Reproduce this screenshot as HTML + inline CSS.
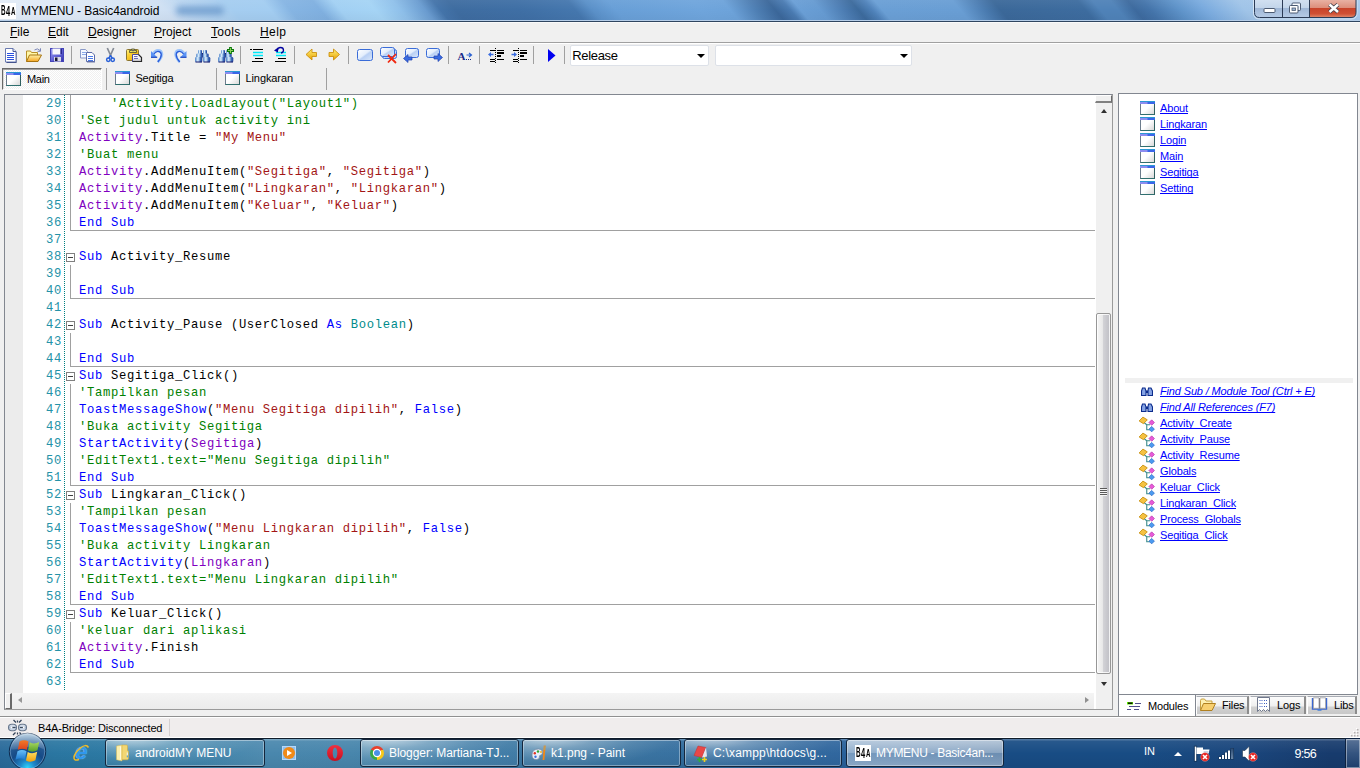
<!DOCTYPE html>
<html><head><meta charset="utf-8"><title>MYMENU - Basic4android</title>
<style>
html,body{margin:0;padding:0}
body{width:1360px;height:768px;overflow:hidden;position:relative;background:#f0f0f0;font-family:"Liberation Sans",sans-serif;font-size:12px;color:#000}
.a{position:absolute}
.t{position:absolute;white-space:pre;line-height:1}
#title{left:0;top:0;width:1360px;height:20px;overflow:hidden;background:#5a8fc6}
#title i{position:absolute;left:-30px;top:0;width:1430px;height:20px;transform-origin:0 0;transform:skewX(40deg);background:linear-gradient(to right,#e3ecf7 22px,#dbe7f5 122px,#cfe0f3 187px,#bdd7f1 207px,#afd1f0 237px,#a5cdf0 254px,#a3cdf1 292px,#86b5e3 312px,#80b0e0 342px,#a2d0f3 362px,#a5d4f5 397px,#8fc0ea 422px,#6a9cd0 447px,#4474aa 462px,#3e6ca0 477px,#3f6fa5 542px,#4577ae 597px,#5a90c8 614px,#689fd7 637px,#6fa5dc 722px,#6da3da 752px,#4f80b5 777px,#3b679a 797px,#4a7bb2 812px,#6a9fd6 822px,#669bd2 842px,#4a7ab0 867px,#3c6a9c 880px,#4f82ba 894px,#6a9fd5 904px,#699ed4 982px,#4a7bb0 1007px,#3b6899 1022px,#3d6c9f 1107px,#4f82b8 1122px,#4f82b8 1140px,#3d6a9e 1157px,#4474aa 1172px,#5f94ca 1202px,#79aade 1227px,#a0c4e8 1267px,#a8caec 1382px)}
#title s{position:absolute;left:176px;top:6px;width:48px;height:9px;background:#6d9bcd;filter:blur(3px);border-radius:4px;opacity:.85}
#title b{position:absolute;left:0;top:0;width:1360px;height:20px;background:linear-gradient(to bottom,rgba(255,255,255,.05) 0,rgba(255,255,255,0) 50%,rgba(0,0,20,.03) 100%)}
#titleline{left:0;top:20px;width:1360px;height:2px;background:linear-gradient(#b5cde8 0,#b5cde8 1px,#2f4560 1px,#2f4560 2px)}
.mi{top:26px;font-size:12px}
.mi u{text-decoration:underline;text-underline-offset:1px;text-decoration-skip-ink:none}
.b4{font-weight:bold;transform:scaleX(.5);transform-origin:0 0;color:#000}
.sepv{position:absolute;width:1px;background:#a0a0a0}
.code{font-family:"Liberation Mono",monospace;font-size:12.200px;letter-spacing:.68px;line-height:17px;white-space:pre;position:absolute;left:79px;height:17px;margin-top:1px}
.ln{font-family:"Liberation Mono",monospace;font-size:12.200px;letter-spacing:.68px;line-height:17px;position:absolute;left:29.500px;margin-top:1px;width:32.500px;text-align:right;color:#2492a8;height:17px}
.c{color:#008000}.k{color:#0000ff}.o{color:#8000c0}.s{color:#a31515}.y{color:#008b8b}.f{color:#0000ff}
.hl{position:absolute;left:70px;width:1025px;height:1px;background:#a0a0a0}
.vl{position:absolute;left:70px;width:1px;background:#a0a0a0}
.fb{position:absolute;left:66px;width:7px;height:7px;border:1px solid #808080;background:#fff}
.fb:after{content:"";position:absolute;left:1px;top:3px;width:5px;height:1px;background:#404040}
.lk{position:absolute;font-size:11px;color:#0000ff;text-decoration:underline;text-decoration-skip-ink:none;text-underline-offset:1px;white-space:pre;line-height:1;letter-spacing:-.15px;margin-top:1px}
.wi:before{content:"";position:absolute;left:-1px;top:-3px;width:15px;height:3px;background:linear-gradient(to bottom,#2c98d4 0,#2c98d4 1px,transparent 1px),linear-gradient(to right,#8c8cf0 0,#8c8cf0 45%,#3a66e8 55%)}
.wi{position:absolute;width:13px;height:10px;border:1px solid #6c7c8c;border-top:3px solid #3f6fe0;border-right-color:#2f5f5f;border-bottom-color:#2f6f6f;background:linear-gradient(135deg,#fff 45%,#d8d8d8 100%)}
.tb{position:absolute;top:744px;height:22px;border:1px solid #1c2d44;border-radius:3px;box-shadow:inset 0 0 0 1px rgba(255,255,255,.35);color:#fff;font-size:12px}
.tb span{position:absolute;left:28px;top:4px;white-space:pre;line-height:1}
</style></head><body>
<!-- title bar -->
<div class="a" id="title"><i></i><s></s><b></b></div><div class="a" id="titleline"></div>
<div class="a" style="left:0;top:3px;width:16px;height:16px;background:#fff"></div>
<div class="t b4" style="left:.8px;top:2px;font-size:15px;transform:scaleX(.42)">B</div><div class="t b4" style="left:5.800px;top:3px;font-size:15px">4</div><div class="t b4" style="left:10.800px;top:6px;font-size:11px;transform:scaleX(.56)">A</div>
<div class="t" id="ttl" style="left:21px;top:5px;font-size:12px;letter-spacing:-.08px">MYMENU - Basic4android</div>
<!-- caption buttons -->
<svg class="a" style="left:1250px;top:0" width="110" height="20" viewBox="1250 0 110 20">
<defs>
<linearGradient id="cb1" x1="0" y1="0" x2="0" y2="1"><stop offset="0" stop-color="#d3e1f1"/><stop offset=".46" stop-color="#c3d5ea"/><stop offset=".5" stop-color="#9fb7d6"/><stop offset="1" stop-color="#b6cbe6"/></linearGradient>
<linearGradient id="cb2" x1="0" y1="0" x2="0" y2="1"><stop offset="0" stop-color="#eab5a8"/><stop offset=".46" stop-color="#dd8f7c"/><stop offset=".5" stop-color="#c8432a"/><stop offset=".8" stop-color="#cf5034"/><stop offset="1" stop-color="#e08a6c"/></linearGradient>
</defs>
<path d="M1253.500 -1v14q0 6 6 6h91.500q6 0 6-6v-14" fill="none" stroke="rgba(255,255,255,.55)" stroke-width="1"/>
<path d="M1254.500 -1v13.500q0 5 5 5h50v-18.500z" fill="url(#cb1)"/>
<path d="M1309.500 -1v18.500h41.500q5 0 5-5v-13.500z" fill="url(#cb2)"/>
<path d="M1254.500 -1v13.500q0 5 5 5h91.500q5 0 5-5v-13.500M1282.500 0v17.500M1309.500 0v17.500" fill="none" stroke="#2b3b55" stroke-width="1"/>
<rect x="1264" y="8.500" width="11" height="4" rx="1" fill="#fff" stroke="#4c5b72" stroke-width="1"/>
<rect x="1292" y="3" width="8.500" height="7.500" rx="1" fill="#c4d5ea" stroke="#4c5b72" stroke-width="1"/><rect x="1293.300" y="4.300" width="5.900" height="4.900" fill="none" stroke="#fff" stroke-width="1.200"/>
<rect x="1289.500" y="5.500" width="8.500" height="7.500" rx="1" fill="#fff" stroke="#4c5b72" stroke-width="1"/><rect x="1292" y="8" width="3.500" height="2.500" fill="#9db4d2" stroke="#4c5b72" stroke-width=".8"/>
<path d="M1329.500 4.500l8.500 7.500M1338 4.500l-8.500 7.500" stroke="#3c3c48" stroke-width="4.200" stroke-linecap="butt"/>
<path d="M1329.500 4.500l8.500 7.500M1338 4.500l-8.500 7.500" stroke="#fff" stroke-width="2.600" stroke-linecap="butt"/>
</svg>
<!-- menu -->
<div class="a" id="mwl" style="left:0;top:22px;width:1360px;height:1px;background:#fafafa"></div>
<div class="t mi" style="left:10px"><u>F</u>ile</div>
<div class="t mi" style="left:48px"><u>E</u>dit</div>
<div class="t mi" style="left:88px"><u>D</u>esigner</div>
<div class="t mi" style="left:154px"><u>P</u>roject</div>
<div class="t mi" style="left:211px;letter-spacing:.3px"><u>T</u>ools</div>
<div class="t mi" style="left:260px;letter-spacing:.4px"><u>H</u>elp</div>
<div class="a" style="left:0;top:42px;width:1360px;height:1px;background:#a0a0a0"></div>
<div class="a" style="left:0;top:43px;width:1360px;height:1px;background:#fff"></div>
<!-- toolbar separators -->
<div class="sepv" style="left:71px;top:46px;height:18px"></div>
<div class="sepv" style="left:240px;top:46px;height:18px"></div>
<div class="sepv" style="left:294px;top:46px;height:18px"></div>
<div class="sepv" style="left:348px;top:46px;height:18px"></div>
<div class="sepv" style="left:448px;top:46px;height:18px"></div>
<div class="sepv" style="left:479px;top:46px;height:18px"></div>
<div class="sepv" style="left:533px;top:46px;height:18px"></div>
<div class="sepv" style="left:564px;top:46px;height:18px"></div>
<!-- toolbar icons -->
<svg class="a" style="left:0;top:44px" width="570" height="24" viewBox="0 44 570 24">
<defs>
<linearGradient id="gfold" x1="0" y1="0" x2="0" y2="1"><stop offset="0" stop-color="#fff2a8"/><stop offset="1" stop-color="#f5a623"/></linearGradient>
<linearGradient id="gwin" x1="0" y1="0" x2="1" y2="1"><stop offset="0" stop-color="#ffffff"/><stop offset=".45" stop-color="#e4eefc"/><stop offset=".55" stop-color="#b9d0f4"/><stop offset="1" stop-color="#dbe8fb"/></linearGradient>
<linearGradient id="gbin" x1="0" y1="0" x2="1" y2="0"><stop offset="0" stop-color="#4a80c8"/><stop offset=".4" stop-color="#e0f4ff"/><stop offset=".75" stop-color="#3a6ab8"/><stop offset="1" stop-color="#20409c"/></linearGradient>
<linearGradient id="garr" x1="0" y1="0" x2="0" y2="1"><stop offset="0" stop-color="#fff27a"/><stop offset="1" stop-color="#e8a000"/></linearGradient>
</defs>
<!-- new -->
<path d="M6.500 49.500h7l3 3v10.500h-10z" fill="#1c2c6c"/>
<path d="M5.500 48.500h7.500l3 3v10.500h-10.500z" fill="#fff" stroke="#6a7ab0"/><path d="M13 48.500v3h3" fill="#e4ecfa" stroke="#4a5a98"/>
<path d="M7 53.500h7M7 55.500h7M7 57.500h7M7 59.500h7" stroke="#2a50e0"/>
<!-- open -->
<path d="M26.500 61.500v-10.500h4l1 1.500h6v3" fill="#fff7a8" stroke="#b89028"/><path d="M26.500 61.500l3-6.500h12l-3.500 6.500z" fill="url(#gfold)" stroke="#a87410"/>
<path d="M34.500 50q3-2.500 5.500 .5M40.500 48.300v3h-3" fill="none" stroke="#7a86b8"/>
<!-- save -->
<defs><linearGradient id="gsave" x1="0" y1="0" x2="1" y2="1"><stop offset="0" stop-color="#a0a0f4"/><stop offset=".5" stop-color="#6464d8"/><stop offset="1" stop-color="#3434ac"/></linearGradient></defs>
<rect x="50.500" y="48.500" width="13" height="13" fill="url(#gsave)" stroke="#4444b8" stroke-width="1"/><rect x="52.500" y="48.500" width="8" height="6" fill="#f6f6fc"/><rect x="60.500" y="49" width="1.500" height="5" fill="#28288c"/><rect x="54" y="57" width="7" height="4.500" fill="#d8d8e8"/><rect x="55" y="57.500" width="2.500" height="3.500" fill="#181838"/>
<!-- copy -->
<path d="M80.500 49.500h5l2 2v6.500h-7z" fill="#f4f8ff" stroke="#8a9ac8"/><path d="M82 52.500h4M82 54.500h4" stroke="#8aaae8"/>
<path d="M87.500 53.500h5l2.500 2.500v6.500h-8z" fill="#20307c" opacity=".6"/>
<path d="M86.500 52.500h5.500l2.500 2.500v6.500h-8z" fill="#fff" stroke="#5a6aa8"/><path d="M88 56.500h5M88 58.500h5M88 60.500h5" stroke="#4a7ae8"/>
<!-- cut -->
<path d="M107.300 48l3.800 8.500M113.700 48l-3.800 8.500" stroke="#868c96" stroke-width="1.700" fill="none"/><circle cx="108.300" cy="59.700" r="1.700" fill="none" stroke="#2860d8" stroke-width="1.500"/><circle cx="112.700" cy="59.700" r="1.700" fill="none" stroke="#2860d8" stroke-width="1.500"/><path d="M110.500 55.500l-1.800 2.800M110.500 55.500l1.800 2.800" stroke="#2860d8" stroke-width="1.500"/>
<!-- paste -->
<defs><linearGradient id="gclip" x1="0" y1="0" x2="1" y2="1"><stop offset="0" stop-color="#fff890"/><stop offset=".35" stop-color="#fcd030"/><stop offset="1" stop-color="#e4a000"/></linearGradient><linearGradient id="gpap" x1="0" y1="0" x2="0" y2="1"><stop offset="0" stop-color="#ffffff"/><stop offset=".55" stop-color="#f0f0f4"/><stop offset="1" stop-color="#b4b4b8"/></linearGradient></defs>
<rect x="126.500" y="49.500" width="12" height="11" rx="1" fill="url(#gclip)" stroke="#8a7430" stroke-width="1"/><path d="M129.500 52.500v-2h2v-1.500h3v1.500h2v2z" fill="#e8e060" stroke="#4a4a30" stroke-width=".8"/><rect x="132.300" y="49.800" width="1.400" height="1.400" fill="#303060"/>
<path d="M132.500 54.500h6l3 3v4h-9z" fill="url(#gpap)" stroke="#4848a0" stroke-width="1"/><path d="M138.500 54.500l3 3v4h-9" fill="none" stroke="#282828" stroke-width="1.200"/><path d="M134 56.500h3.500M134 58.500h4" stroke="#6a6ab8"/>
<!-- undo -->
<g id="undo"><path d="M157.800 62Q161.800 58 162 54.300Q161.800 50.300 157.800 50.400Q155 50.500 153 54" fill="none" stroke="#9cc4fa" stroke-width="2.600"/><path d="M157.800 62Q161.300 58 161.300 54.500Q161 51.300 157.800 51.400Q155.500 51.500 153.500 54.500" fill="none" stroke="#2a5cd8" stroke-width="1.300"/><path d="M151 51v6.300h6.200z" fill="#5a92f4"/><path d="M151 57.300h6.200" stroke="#1c48c0" stroke-width="1.200"/></g>
<!-- redo -->
<use href="#undo" transform="translate(337.500 0) scale(-1 1)"/>
<!-- find -->
<g id="bino"><rect x="200.500" y="53" width="3" height="4.500" fill="#1c2470"/>
<rect x="198" y="50" width="4" height="4.500" rx="1" fill="url(#gbin)"/><rect x="196.200" y="53.500" width="6.300" height="4.200" rx="1.200" fill="url(#gbin)"/><rect x="195" y="57" width="7.300" height="5.300" rx="1.300" fill="url(#gbin)"/>
<rect x="203" y="50" width="4" height="4.500" rx="1" fill="url(#gbin)"/><rect x="202.700" y="53.500" width="6" height="4.200" rx="1.200" fill="url(#gbin)"/><rect x="203" y="57" width="7.300" height="5.300" rx="1.300" fill="url(#gbin)"/>
<path d="M195.500 62h6.500M203.500 62h6.500" stroke="#1c1c6c" stroke-width="1"/></g>
<use href="#bino" x="23" y="0"/>
<path d="M227 50.500h7M230.500 47v7" stroke="#0c7a0c" stroke-width="2.800"/><path d="M228 50.500h5M230.500 48v5" stroke="#8cd058" stroke-width="1"/>
<!-- comment block -->
<path d="M250 49.500h2M253 49.500h10M255 58.500h8M252 61.500h11" stroke="#000" stroke-width="1.200"/><path d="M253 52.500h10M253 55.500h10" stroke="#00e8f8" stroke-width="1.400"/>
<path d="M278 58.500h8M275 61.500h11" stroke="#000" stroke-width="1.200"/><path d="M276 52.500h10M276 55.500h10" stroke="#00e8f8" stroke-width="1.400"/>
<path d="M277.500 50.500q0-3 3-3t3 2.800q0 2.200-2.500 2.700" fill="none" stroke="#0000a0" stroke-width="1.300"/><path d="M274 50.500l4-3v5z" fill="#0000a0"/>
<!-- arrows -->
<path d="M306 54.500l6-5.500v3.500h4.500v4h-4.500v3.500z" fill="url(#garr)" stroke="#c88800" stroke-width=".8"/>
<path d="M339.500 54.500l-6-5.500v3.500h-4.500v4h4.500v3.500z" fill="url(#garr)" stroke="#c88800" stroke-width=".8"/>
<!-- bookmarks -->
<rect x="357.500" y="49.500" width="15" height="11" rx="2" fill="url(#gwin)" stroke="#3a6cd8"/>
<rect x="382.500" y="49.500" width="14" height="9" rx="2" fill="url(#gwin)" stroke="#3a6cd8"/><rect x="380.500" y="47.500" width="14" height="9" rx="2" fill="url(#gwin)" stroke="#3a6cd8"/>
<path d="M388 55l8 8M396 54l-8 8.500" stroke="#f02810" stroke-width="1.800"/>
<rect x="405.500" y="48.500" width="13" height="9" rx="2" fill="url(#gwin)" stroke="#3a6cd8"/><path d="M403.500 58.500l4.500-4v2.500h4v3h-4v2.500z" fill="#3a6ce0" stroke="#2040b0" stroke-width=".7"/>
<rect x="426.500" y="48.500" width="13" height="9" rx="2" fill="url(#gwin)" stroke="#3a6cd8"/><path d="M442.500 57.500l-4.500-4v2.500h-4v3h4v2.500z" fill="#3a6ce0" stroke="#2040b0" stroke-width=".7"/>
<!-- A-> -->
<text x="457.500" y="59.500" font-family="Liberation Serif,serif" font-weight="bold" font-size="11" fill="#1a2a8a">A</text>
<path d="M466.500 55h4M469 53l2.500 2-2.500 2" stroke="#2a60d0" stroke-width="1.200" fill="none"/><path d="M466 59.500h6" stroke="#1a2a8a" stroke-dasharray="1 1"/>
<!-- outdent / indent -->
<g id="ind"><path d="M495.500 48v15" stroke="#000" stroke-dasharray="1 1"/><path d="M490 50.500h5M497 50.500h7M490 59.500h5M497 59.500h7M490 61.500h5" stroke="#000"/><path d="M497 53h7M497 56h4" stroke="#000" stroke-width="2"/></g>
<path d="M488 54.500l3-2.500v1.700h2.500v1.600h-2.500v1.700z" fill="#3a6ce0"/>
<use href="#ind" x="23" y="0"/>
<path d="M517 54.500l-3-2.500v1.700h-2.500v1.600h2.500v1.700z" fill="#3a6ce0"/>
<!-- play -->
<path d="M548 49v13l7.500-6.500z" fill="#0000f0"/>
</svg>
<!-- combos -->
<div class="a" style="left:570px;top:45px;width:137px;height:19px;border:1px solid #dde1e8;border-radius:2px;background:#fff"></div>
<div class="t" id="rel" style="left:572.300px;top:49px;font-size:13px;letter-spacing:-.35px">Release</div>
<div class="a" style="left:697px;top:54px;width:0;height:0;border-left:4px solid transparent;border-right:4px solid transparent;border-top:4px solid #000"></div>
<div class="a" style="left:715px;top:45px;width:195px;height:19px;border:1px solid #dde1e8;border-radius:2px;background:#fff"></div>
<div class="a" style="left:900px;top:54px;width:0;height:0;border-left:4px solid transparent;border-right:4px solid transparent;border-top:4px solid #000"></div>
<!-- module tabs -->
<div class="a" style="left:2px;top:68px;width:98px;height:20px;border:1px solid #696969;border-right-color:#fff;border-bottom-color:#fff;background:repeating-conic-gradient(#fff 0 25%,#f0f0f0 0 50%) 0 0/2px 2px;box-shadow:inset 0 1px 0 #a0a0a0,inset 1px 0 0 #d8d8d8"></div>
<div class="wi" style="left:6px;top:72px"></div>
<div class="t" id="tmain" style="left:27px;top:74px;font-size:11px;letter-spacing:-.3px">Main</div>
<div class="sepv" style="left:106px;top:68px;height:22px"></div>
<div class="wi" style="left:115px;top:71px"></div>
<div class="t" id="tseg" style="left:135.500px;top:73px;font-size:11px;letter-spacing:-.25px">Segitiga</div>
<div class="sepv" style="left:216px;top:68px;height:22px"></div>
<div class="wi" style="left:225px;top:71px"></div>
<div class="t" id="tlin" style="left:245.500px;top:73px;font-size:11px;letter-spacing:-.1px">Lingkaran</div>
<div class="sepv" style="left:326px;top:68px;height:22px"></div>
<!-- editor -->
<div class="a" style="left:4px;top:94px;width:1107px;height:614px;border:1px solid #828790;border-right-color:#9a9a9a;border-bottom-color:#9a9a9a;background:#fff;box-sizing:content-box"></div>
<div class="a" style="left:5px;top:95px;width:18px;height:598px;background:#ececec"></div>
<div class="a" style="left:64px;top:95px;width:1px;height:596px;background:repeating-linear-gradient(to bottom,#008080 0,#008080 1px,#fff 1px,#fff 2px)"></div>
<div class="ln" style="top:95px">29</div>
<div class="code" style="top:95px"><span class="c">    'Activity.LoadLayout("Layout1")</span></div>
<div class="ln" style="top:112px">30</div>
<div class="code" style="top:112px"><span class="c">'Set judul untuk activity ini</span></div>
<div class="ln" style="top:129px">31</div>
<div class="code" style="top:129px"><span class="o">Activity</span>.Title = <span class="s">"My Menu"</span></div>
<div class="ln" style="top:146px">32</div>
<div class="code" style="top:146px"><span class="c">'Buat menu</span></div>
<div class="ln" style="top:163px">33</div>
<div class="code" style="top:163px"><span class="o">Activity</span>.AddMenuItem(<span class="s">"Segitiga"</span>, <span class="s">"Segitiga"</span>)</div>
<div class="ln" style="top:180px">34</div>
<div class="code" style="top:180px"><span class="o">Activity</span>.AddMenuItem(<span class="s">"Lingkaran"</span>, <span class="s">"Lingkaran"</span>)</div>
<div class="ln" style="top:197px">35</div>
<div class="code" style="top:197px"><span class="o">Activity</span>.AddMenuItem(<span class="s">"Keluar"</span>, <span class="s">"Keluar"</span>)</div>
<div class="ln" style="top:214px">36</div>
<div class="code" style="top:214px"><span class="k">End Sub</span></div>
<div class="ln" style="top:231px">37</div>
<div class="ln" style="top:248px">38</div>
<div class="code" style="top:248px"><span class="k">Sub</span> Activity_Resume</div>
<div class="ln" style="top:265px">39</div>
<div class="ln" style="top:282px">40</div>
<div class="code" style="top:282px"><span class="k">End Sub</span></div>
<div class="ln" style="top:299px">41</div>
<div class="ln" style="top:316px">42</div>
<div class="code" style="top:316px"><span class="k">Sub</span> Activity_Pause (UserClosed <span class="k">As</span> <span class="y">Boolean</span>)</div>
<div class="ln" style="top:333px">43</div>
<div class="ln" style="top:350px">44</div>
<div class="code" style="top:350px"><span class="k">End Sub</span></div>
<div class="ln" style="top:367px">45</div>
<div class="code" style="top:367px"><span class="k">Sub</span> Segitiga_Click()</div>
<div class="ln" style="top:384px">46</div>
<div class="code" style="top:384px"><span class="c">'Tampilkan pesan</span></div>
<div class="ln" style="top:401px">47</div>
<div class="code" style="top:401px"><span class="f">ToastMessageShow</span>(<span class="s">"Menu Segitiga dipilih"</span>, <span class="k">False</span>)</div>
<div class="ln" style="top:418px">48</div>
<div class="code" style="top:418px"><span class="c">'Buka activity Segitiga</span></div>
<div class="ln" style="top:435px">49</div>
<div class="code" style="top:435px"><span class="f">StartActivity</span>(<span class="o">Segitiga</span>)</div>
<div class="ln" style="top:452px">50</div>
<div class="code" style="top:452px"><span class="c">'EditText1.text="Menu Segitiga dipilih"</span></div>
<div class="ln" style="top:469px">51</div>
<div class="code" style="top:469px"><span class="k">End Sub</span></div>
<div class="ln" style="top:486px">52</div>
<div class="code" style="top:486px"><span class="k">Sub</span> Lingkaran_Click()</div>
<div class="ln" style="top:503px">53</div>
<div class="code" style="top:503px"><span class="c">'Tampilkan pesan</span></div>
<div class="ln" style="top:520px">54</div>
<div class="code" style="top:520px"><span class="f">ToastMessageShow</span>(<span class="s">"Menu Lingkaran dipilih"</span>, <span class="k">False</span>)</div>
<div class="ln" style="top:537px">55</div>
<div class="code" style="top:537px"><span class="c">'Buka activity Lingkaran</span></div>
<div class="ln" style="top:554px">56</div>
<div class="code" style="top:554px"><span class="f">StartActivity</span>(<span class="o">Lingkaran</span>)</div>
<div class="ln" style="top:571px">57</div>
<div class="code" style="top:571px"><span class="c">'EditText1.text="Menu Lingkaran dipilih"</span></div>
<div class="ln" style="top:588px">58</div>
<div class="code" style="top:588px"><span class="k">End Sub</span></div>
<div class="ln" style="top:605px">59</div>
<div class="code" style="top:605px"><span class="k">Sub</span> Keluar_Click()</div>
<div class="ln" style="top:622px">60</div>
<div class="code" style="top:622px"><span class="c">'keluar dari aplikasi</span></div>
<div class="ln" style="top:639px">61</div>
<div class="code" style="top:639px"><span class="o">Activity</span>.Finish</div>
<div class="ln" style="top:656px">62</div>
<div class="code" style="top:656px"><span class="k">End Sub</span></div>
<div class="ln" style="top:673px">63</div>
<div class="fb" style="top:253px"></div>
<div class="fb" style="top:321px"></div>
<div class="fb" style="top:372px"></div>
<div class="fb" style="top:491px"></div>
<div class="fb" style="top:610px"></div>
<div class="hl" style="top:230px"></div>
<div class="hl" style="top:298px"></div>
<div class="hl" style="top:366px"></div>
<div class="hl" style="top:485px"></div>
<div class="hl" style="top:604px"></div>
<div class="hl" style="top:672px"></div>
<div class="vl" style="top:95px;height:135px"></div>
<div class="vl" style="top:265px;height:33px"></div>
<div class="vl" style="top:333px;height:33px"></div>
<div class="vl" style="top:384px;height:101px"></div>
<div class="vl" style="top:503px;height:101px"></div>
<div class="vl" style="top:622px;height:50px"></div>
<!-- editor scrollbars -->
<div class="a" style="left:1096px;top:95px;width:16px;height:597px;background:#f0f0f0"></div>
<div class="a" style="left:1096px;top:692px;width:16px;height:17px;background:#f0f0f0"></div>
<div class="a" style="left:1095px;top:95px;width:15px;height:5px;background:#f0f0f0;border:1px solid #fff;border-right-color:#696969;border-bottom:2px solid #696969;border-bottom-color:#808080"></div>
<div class="a" style="left:1101px;top:109px;width:0;height:0;border-left:3.500px solid transparent;border-right:3.500px solid transparent;border-bottom:4px solid #303030"></div>
<div class="a" style="left:1096px;top:313px;width:13px;height:359px;border:1px solid #979797;border-radius:2px;box-shadow:inset 0 0 0 1px rgba(255,255,255,.8);background:linear-gradient(to right,#f6f6f6 0,#e9e9e9 42%,#d2d2d6 50%,#bfbfc5 100%)"></div>
<div class="a" style="left:1100px;top:488px;width:7px;height:8px;background:repeating-linear-gradient(to bottom,#5a5a5a 0,#5a5a5a 1px,#f4f4f4 1px,#f4f4f4 2px)"></div>
<div class="a" style="left:1101px;top:682px;width:0;height:0;border-left:3.500px solid transparent;border-right:3.500px solid transparent;border-top:4px solid #303030"></div>
<div class="a" style="left:5px;top:693px;width:1089px;height:16px;background:linear-gradient(#f4f4f4,#ebebeb)"></div>
<div class="a" style="left:5px;top:693px;width:4px;height:14px;background:#f0f0f0;border:1px solid #fff;border-right:2px solid #696969;border-bottom-color:#696969"></div>
<div class="a" style="left:18px;top:697px;width:0;height:0;border-top:3.500px solid transparent;border-bottom:3.500px solid transparent;border-right:4px solid #989898"></div>
<div class="a" style="left:1085px;top:697px;width:0;height:0;border-top:3.500px solid transparent;border-bottom:3.500px solid transparent;border-left:4px solid #909090"></div>
<!-- right panel -->
<div class="a" style="left:1118px;top:93px;width:238px;height:600px;border:1px solid #828790;background:#fff"></div>
<div class="wi" style="left:1140px;top:101px"></div>
<div class="lk" style="left:1160px;top:102px">About</div>
<div class="wi" style="left:1140px;top:117px"></div>
<div class="lk" style="left:1160px;top:118px">Lingkaran</div>
<div class="wi" style="left:1140px;top:133px"></div>
<div class="lk" style="left:1160px;top:134px">Login</div>
<div class="wi" style="left:1140px;top:149px"></div>
<div class="lk" style="left:1160px;top:150px">Main</div>
<div class="wi" style="left:1140px;top:165px"></div>
<div class="lk" style="left:1160px;top:166px">Segitiga</div>
<div class="wi" style="left:1140px;top:181px"></div>
<div class="lk" style="left:1160px;top:182px">Setting</div>
<div class="a" style="left:1125px;top:378px;width:228px;height:5px;background:#f0f0f0"></div>
<div class="lk" style="left:1160px;top:385px;font-style:italic">Find Sub / Module Tool (Ctrl + E)</div>
<div class="lk" style="left:1160px;top:401px;font-style:italic">Find All References (F7)</div>
<svg class="a" style="left:1141px;top:387px" width="12" height="9" viewBox="0 0 12 9"><path d="M1.500 1h2.500l1 3v4.500h-4.500v-4.500zM7.500 1h2.500l1.500 3v4.500h-4.500v-4.500z" fill="#86a4e4" stroke="#0c2c8c" stroke-width="1.100"/><rect x="5" y="3.500" width="2" height="2.500" fill="#0c2c8c"/></svg>
<svg class="a" style="left:1141px;top:403px" width="12" height="9" viewBox="0 0 12 9"><path d="M1.500 1h2.500l1 3v4.500h-4.500v-4.500zM7.500 1h2.500l1.500 3v4.500h-4.500v-4.500z" fill="#86a4e4" stroke="#0c2c8c" stroke-width="1.100"/><rect x="5" y="3.500" width="2" height="2.500" fill="#0c2c8c"/></svg>
<svg class="a" style="left:1138px;top:415.5px" width="17.500" height="17.500" viewBox="0 0 16 16"><path d="M5 5.500l3 2.500v4.500h3M8 8h3" fill="none" stroke="#3a8a8a" stroke-width="1"/><path d="M4.500 1l4 2.500-3.500 3.500-4-2.500z" fill="#f5c242" stroke="#c89010" stroke-width=".8"/><path d="M12.500 3.500l2.500 2.500-2.500 2.500-2.500-2.500z" fill="#e85ad8" stroke="#b030a8" stroke-width=".6"/><path d="M12.500 9.500l2.500 2.500-2.500 2.500-2.500-2.500z" fill="#4a9af0" stroke="#2060c0" stroke-width=".6"/></svg>
<div class="lk" style="left:1160px;top:417px">Activity_Create</div>
<svg class="a" style="left:1138px;top:431.5px" width="17.500" height="17.500" viewBox="0 0 16 16"><path d="M5 5.500l3 2.500v4.500h3M8 8h3" fill="none" stroke="#3a8a8a" stroke-width="1"/><path d="M4.500 1l4 2.500-3.500 3.500-4-2.500z" fill="#f5c242" stroke="#c89010" stroke-width=".8"/><path d="M12.500 3.500l2.500 2.500-2.500 2.500-2.500-2.500z" fill="#e85ad8" stroke="#b030a8" stroke-width=".6"/><path d="M12.500 9.500l2.500 2.500-2.500 2.500-2.500-2.500z" fill="#4a9af0" stroke="#2060c0" stroke-width=".6"/></svg>
<div class="lk" style="left:1160px;top:433px">Activity_Pause</div>
<svg class="a" style="left:1138px;top:447.5px" width="17.500" height="17.500" viewBox="0 0 16 16"><path d="M5 5.500l3 2.500v4.500h3M8 8h3" fill="none" stroke="#3a8a8a" stroke-width="1"/><path d="M4.500 1l4 2.500-3.500 3.500-4-2.500z" fill="#f5c242" stroke="#c89010" stroke-width=".8"/><path d="M12.500 3.500l2.500 2.500-2.500 2.500-2.500-2.500z" fill="#e85ad8" stroke="#b030a8" stroke-width=".6"/><path d="M12.500 9.500l2.500 2.500-2.500 2.500-2.500-2.500z" fill="#4a9af0" stroke="#2060c0" stroke-width=".6"/></svg>
<div class="lk" style="left:1160px;top:449px">Activity_Resume</div>
<svg class="a" style="left:1138px;top:463.5px" width="17.500" height="17.500" viewBox="0 0 16 16"><path d="M5 5.500l3 2.500v4.500h3M8 8h3" fill="none" stroke="#3a8a8a" stroke-width="1"/><path d="M4.500 1l4 2.500-3.500 3.500-4-2.500z" fill="#f5c242" stroke="#c89010" stroke-width=".8"/><path d="M12.500 3.500l2.500 2.500-2.500 2.500-2.500-2.500z" fill="#e85ad8" stroke="#b030a8" stroke-width=".6"/><path d="M12.500 9.500l2.500 2.500-2.500 2.500-2.500-2.500z" fill="#4a9af0" stroke="#2060c0" stroke-width=".6"/></svg>
<div class="lk" style="left:1160px;top:465px">Globals</div>
<svg class="a" style="left:1138px;top:479.5px" width="17.500" height="17.500" viewBox="0 0 16 16"><path d="M5 5.500l3 2.500v4.500h3M8 8h3" fill="none" stroke="#3a8a8a" stroke-width="1"/><path d="M4.500 1l4 2.500-3.500 3.500-4-2.500z" fill="#f5c242" stroke="#c89010" stroke-width=".8"/><path d="M12.500 3.500l2.500 2.500-2.500 2.500-2.500-2.500z" fill="#e85ad8" stroke="#b030a8" stroke-width=".6"/><path d="M12.500 9.500l2.500 2.500-2.500 2.500-2.500-2.500z" fill="#4a9af0" stroke="#2060c0" stroke-width=".6"/></svg>
<div class="lk" style="left:1160px;top:481px">Keluar_Click</div>
<svg class="a" style="left:1138px;top:495.5px" width="17.500" height="17.500" viewBox="0 0 16 16"><path d="M5 5.500l3 2.500v4.500h3M8 8h3" fill="none" stroke="#3a8a8a" stroke-width="1"/><path d="M4.500 1l4 2.500-3.500 3.500-4-2.500z" fill="#f5c242" stroke="#c89010" stroke-width=".8"/><path d="M12.500 3.500l2.500 2.500-2.500 2.500-2.500-2.500z" fill="#e85ad8" stroke="#b030a8" stroke-width=".6"/><path d="M12.500 9.500l2.500 2.500-2.500 2.500-2.500-2.500z" fill="#4a9af0" stroke="#2060c0" stroke-width=".6"/></svg>
<div class="lk" style="left:1160px;top:497px">Lingkaran_Click</div>
<svg class="a" style="left:1138px;top:511.5px" width="17.500" height="17.500" viewBox="0 0 16 16"><path d="M5 5.500l3 2.500v4.500h3M8 8h3" fill="none" stroke="#3a8a8a" stroke-width="1"/><path d="M4.500 1l4 2.500-3.500 3.500-4-2.500z" fill="#f5c242" stroke="#c89010" stroke-width=".8"/><path d="M12.500 3.500l2.500 2.500-2.500 2.500-2.500-2.500z" fill="#e85ad8" stroke="#b030a8" stroke-width=".6"/><path d="M12.500 9.500l2.500 2.500-2.500 2.500-2.500-2.500z" fill="#4a9af0" stroke="#2060c0" stroke-width=".6"/></svg>
<div class="lk" style="left:1160px;top:513px">Process_Globals</div>
<svg class="a" style="left:1138px;top:527.5px" width="17.500" height="17.500" viewBox="0 0 16 16"><path d="M5 5.500l3 2.500v4.500h3M8 8h3" fill="none" stroke="#3a8a8a" stroke-width="1"/><path d="M4.500 1l4 2.500-3.500 3.500-4-2.500z" fill="#f5c242" stroke="#c89010" stroke-width=".8"/><path d="M12.500 3.500l2.500 2.500-2.500 2.500-2.500-2.500z" fill="#e85ad8" stroke="#b030a8" stroke-width=".6"/><path d="M12.500 9.500l2.500 2.500-2.500 2.500-2.500-2.500z" fill="#4a9af0" stroke="#2060c0" stroke-width=".6"/></svg>
<div class="lk" style="left:1160px;top:529px">Segitiga_Click</div>
<!-- right tabs -->
<div class="a" style="left:1118px;top:695px;width:1px;height:21px;background:#828790"></div>
<div class="a" style="left:1119px;top:695px;width:76px;height:21px;background:#fff;border-right:1px solid #828790"></div>
<div class="a" style="left:1196px;top:695px;width:161px;height:21px;background:#f0f0f0"></div>
<div class="a" style="left:1196px;top:696px;width:53px;height:18px;border:1px solid #a8acb4;border-right:2px solid #8c8c8c;border-bottom:none;border-left-color:#fff;background:linear-gradient(#fcfcfc 0,#f0f0f0 50%,#d0d0d0 62%,#c8c8c8 100%);box-sizing:border-box"></div>
<div class="t" style="left:1222px;top:700px;font-size:11px;letter-spacing:-.15px">Files</div>
<div class="a" style="left:1250px;top:696px;width:56px;height:18px;border:1px solid #a8acb4;border-right:2px solid #8c8c8c;border-bottom:none;border-left-color:#fff;background:linear-gradient(#fcfcfc 0,#f0f0f0 50%,#d0d0d0 62%,#c8c8c8 100%);box-sizing:border-box"></div>
<div class="t" style="left:1277px;top:700px;font-size:11px;letter-spacing:-.15px">Logs</div>
<div class="a" style="left:1307px;top:696px;width:50px;height:18px;border:1px solid #a8acb4;border-right:2px solid #8c8c8c;border-bottom:none;border-left-color:#fff;background:linear-gradient(#fcfcfc 0,#f0f0f0 50%,#d0d0d0 62%,#c8c8c8 100%);box-sizing:border-box"></div>
<div class="t" style="left:1334px;top:700px;font-size:11px;letter-spacing:-.15px">Libs</div>
<div class="t" id="tmod" style="left:1148px;top:701px;font-size:11px;letter-spacing:-.2px">Modules</div>
<svg class="a" style="left:1127px;top:701px" width="15" height="10" viewBox="0 0 15 10"><rect x="0" y="1" width="6" height="2.500" fill="#60f000"/><rect x="1" y="1.500" width="4.500" height="1.400" fill="#000"/><path d="M8 2.500h6M2 5.500h11M0 8.500h4M7 8.500h5" stroke="#50508c" stroke-width="1"/></svg>
<svg class="a" style="left:1200px;top:698px" width="16" height="14" viewBox="0 0 16 14"><path d="M.5 12.500v-10q0-1.500 1.500-1.500h2.500l1.500 2h6v3" fill="#fdf0b0" stroke="#c8a040"/><path d="M.5 12.500l3-7h12l-3.500 7z" fill="#f8d070" stroke="#b08020"/></svg>
<svg class="a" style="left:1257px;top:697px" width="13" height="16" viewBox="0 0 13 16"><path d="M.5.5h12v14l-2-2-2 2-2-2-2 2-2-2-2 2z" fill="#fff" stroke="#70788c"/><path d="M2.500 3.500h3M7 3.500h3M2.500 6.500h3M7 6.500h3M2.500 9.500h3M7 9.500h3" stroke="#4060c0" stroke-dasharray="1 1"/></svg>
<svg class="a" style="left:1311px;top:697px" width="17" height="15" viewBox="0 0 17 15"><path d="M1.500 1v11h14v-11" fill="#fff" stroke="#3a66d0" stroke-width="1.400"/><path d="M2.500 .8h5.500v10.500h-5.500zM9 .8h5.500v10.500h-5.500z" fill="#fff" stroke="#9a9aa0" stroke-width=".8"/><path d="M8.500 1v10.500" stroke="#808088" stroke-width="1"/><path d="M6.500 13h4" stroke="#3a7ad8" stroke-width="1.400"/></svg>
<!-- status bar -->
<div class="a" style="left:0;top:716px;width:1360px;height:1px;background:#909090"></div>
<div class="a" style="left:0;top:717px;width:1360px;height:21px;background:#f0eded;border-top:1px solid #fff;border-bottom:1px solid #fff;box-sizing:border-box"></div>
<div class="a" style="left:169px;top:719px;width:1px;height:17px;background:#d4d0d0"></div>
<div class="t" id="stat" style="left:38px;top:722.500px;font-size:11px;letter-spacing:-.2px">B4A-Bridge: Disconnected</div>
<svg class="a" style="left:6px;top:718px" width="24" height="19" viewBox="6 718 24 19"><defs><linearGradient id="lk" x1="0" y1="0" x2="0" y2="1"><stop offset="0" stop-color="#eef2f8"/><stop offset=".5" stop-color="#a8b8d0"/><stop offset="1" stop-color="#e0e6f0"/></linearGradient></defs><rect x="8.500" y="724.300" width="8" height="6.400" rx="3.200" fill="url(#lk)" stroke="#66768c" stroke-width="1.100"/><rect x="18.500" y="724.300" width="8" height="6.400" rx="3.200" fill="url(#lk)" stroke="#66768c" stroke-width="1.100"/><path d="M11 727.500h4.500M20 727.500h4.500" stroke="#3c4858" stroke-width="1.200"/><circle cx="11.500" cy="727.500" r="1" fill="#fff"/><circle cx="23.800" cy="727.500" r="1" fill="#fff"/><path d="M17.500 720.500v2M13.500 720l2.500 2.500M21.500 720l-2.500 2.500M17.500 732.500v2M15.500 732.500l-2.500 2.500M19.500 732.500l1.500 1.500" stroke="#34445a" stroke-width="1.250"/></svg>
<svg class="a" style="left:1348px;top:727px" width="11" height="10" viewBox="1348 727 11 10"><g fill="#b4b0b0"><rect x="1357" y="729" width="1.500" height="1.500"/><rect x="1354" y="732" width="1.500" height="1.500"/><rect x="1357" y="732" width="1.500" height="1.500"/><rect x="1351" y="735" width="1.500" height="1.500"/><rect x="1354" y="735" width="1.500" height="1.500"/><rect x="1357" y="735" width="1.500" height="1.500"/></g><g fill="#fff"><rect x="1356" y="728" width="1" height="1"/><rect x="1353" y="731" width="1" height="1"/><rect x="1356" y="731" width="1" height="1"/><rect x="1350" y="734" width="1" height="1"/><rect x="1353" y="734" width="1" height="1"/><rect x="1356" y="734" width="1" height="1"/></g></svg>
<!-- taskbar -->
<div class="a" style="left:0;top:738px;width:1360px;height:30px;background:linear-gradient(to bottom,rgba(255,255,255,.25) 0,rgba(255,255,255,.25) 1px,rgba(255,255,255,.07) 2px,rgba(255,255,255,0) 50%,rgba(0,0,0,.06) 100%),linear-gradient(to right,#2a6a9a 0,#2a76a1 55px,#2c79a3 110px,#3a80a8 200px,#4987ad 270px,#4886ac 350px,#3f7da8 450px,#36739f 560px,#2f6a9c 700px,#28609a 850px,#1f5690 950px,#184c84 1010px,#184c84 1140px,#1a457b 1250px,#173b6d 1330px,#173b6d 1360px);border-top:1px solid #101c2a;box-sizing:border-box"></div>
<div class="a" style="left:105px;top:739px;width:160px;height:28px;border:1px solid #14263c;border-radius:3px;box-shadow:inset 0 0 0 1px rgba(255,255,255,.36);background:radial-gradient(ellipse 80% 120% at 16% -12%,rgba(255,255,255,.68) 0,rgba(255,255,255,.30) 38%,rgba(255,255,255,.12) 70%,rgba(255,255,255,.04) 100%);box-sizing:border-box"></div>
<div class="t" style="left:135px;top:747px;font-size:12px;color:#fff;letter-spacing:0px">androidMY MENU</div>
<div class="a" style="left:360px;top:739px;width:159px;height:28px;border:1px solid #14263c;border-radius:3px;box-shadow:inset 0 0 0 1px rgba(255,255,255,.36);background:radial-gradient(ellipse 80% 120% at 16% -12%,rgba(255,255,255,.68) 0,rgba(255,255,255,.30) 38%,rgba(255,255,255,.12) 70%,rgba(255,255,255,.04) 100%);box-sizing:border-box"></div>
<div class="t" style="left:389px;top:747px;font-size:12px;color:#fff;letter-spacing:-0.08px">Blogger: Martiana-TJ...</div>
<div class="a" style="left:522px;top:739px;width:159px;height:28px;border:1px solid #14263c;border-radius:3px;box-shadow:inset 0 0 0 1px rgba(255,255,255,.36);background:radial-gradient(ellipse 80% 120% at 16% -12%,rgba(255,255,255,.68) 0,rgba(255,255,255,.30) 38%,rgba(255,255,255,.12) 70%,rgba(255,255,255,.04) 100%);box-sizing:border-box"></div>
<div class="t" style="left:551px;top:747px;font-size:12px;color:#fff;letter-spacing:0px">k1.png - Paint</div>
<div class="a" style="left:684px;top:739px;width:158px;height:28px;border:1px solid #14263c;border-radius:3px;box-shadow:inset 0 0 0 1px rgba(255,255,255,.36);background:radial-gradient(ellipse 80% 120% at 16% -12%,rgba(255,255,255,.68) 0,rgba(255,255,255,.30) 38%,rgba(255,255,255,.12) 70%,rgba(255,255,255,.04) 100%);box-sizing:border-box"></div>
<div class="t" style="left:713px;top:747px;font-size:12px;color:#fff;letter-spacing:0.2px">C:\xampp\htdocs\g...</div>
<div class="a" style="left:846px;top:739px;width:158px;height:28px;border:1px solid #14263c;border-radius:3px;box-shadow:inset 0 0 0 1px rgba(255,255,255,.36);background:linear-gradient(to bottom,rgba(255,255,255,.66) 0,rgba(255,255,255,.50) 48%,rgba(255,255,255,.36) 52%,rgba(255,255,255,.46) 100%);box-sizing:border-box"></div>
<div class="t" style="left:876px;top:747px;font-size:12px;color:#fff;letter-spacing:-0.3px">MYMENU - Basic4an...</div>
<svg class="a" style="left:7px;top:731px" width="42" height="37" viewBox="7 731 42 37"><defs><radialGradient id="orb" cx=".5" cy=".95" r=".95"><stop offset="0" stop-color="#2fd8ff"/><stop offset=".22" stop-color="#1f86c8"/><stop offset=".5" stop-color="#164a86"/><stop offset=".8" stop-color="#2a5f96"/><stop offset="1" stop-color="#5d93bd"/></radialGradient><linearGradient id="orbh" x1="0" y1="0" x2="0" y2="1"><stop offset="0" stop-color="#fff" stop-opacity=".62"/><stop offset="1" stop-color="#fff" stop-opacity=".12"/></linearGradient><linearGradient id="fr" x1="0" y1="0" x2="0" y2="1"><stop offset="0" stop-color="#f07a28"/><stop offset="1" stop-color="#e0401c"/></linearGradient><linearGradient id="fg" x1="0" y1="0" x2="0" y2="1"><stop offset="0" stop-color="#a8d860"/><stop offset="1" stop-color="#58a028"/></linearGradient><linearGradient id="fbl" x1="0" y1="0" x2="0" y2="1"><stop offset="0" stop-color="#6ac0f8"/><stop offset="1" stop-color="#1c78d0"/></linearGradient><linearGradient id="fy" x1="0" y1="0" x2="0" y2="1"><stop offset="0" stop-color="#ffe060"/><stop offset="1" stop-color="#f0a010"/></linearGradient></defs><circle cx="27.500" cy="751.500" r="18.200" fill="url(#orb)" stroke="#0f2c50" stroke-width="1"/><circle cx="27.500" cy="751.500" r="17.200" fill="none" stroke="#9cc4e4" stroke-opacity=".55" stroke-width=".8"/><path d="M11 749.500a16.500 16.500 0 0 1 33 0q-8-5.500-16.500-2.500t-16.500 2.500z" fill="url(#orbh)"/><path d="M19.500 741.500q4.500-2.500 9 0l-1.700 8.300q-4.500-2.300-9 0z" fill="url(#fr)"/><path d="M29.700 742.300q4.500 2.500 9.500-.3l-1.700 8.300q-5 2.600-9.500.3z" fill="url(#fg)"/><path d="M17.500 751.200q4.500-2.500 9 0l-1.700 8.500q-4.500-2.500-9.300 0z" fill="url(#fbl)"/><path d="M27.700 752q4.500 2.500 9.500-.3l-1.800 8.500q-5 2.800-9.400.3z" fill="url(#fy)"/></svg>
<div class="t" style="left:75px;top:741px;font-size:22px;font-weight:bold;font-style:italic;color:#2f97ee;text-shadow:0 0 1px #bfe4ff">e</div>
<svg class="a" style="left:70px;top:742px" width="24" height="22" viewBox="70 742 24 22"><path d="M88.500 747.500q-2.500-4-8 .5t-6.500 9q-.5 4.500 5 2.500" fill="none" stroke="#f0bc28" stroke-width="1.500"/></svg>
<svg class="a" style="left:115px;top:744px" width="15" height="18" viewBox="0 0 15 18"><path d="M1.500 2l5.500-1v16l-5.500-1.200z" fill="#fbefae" stroke="#d8b850" stroke-width=".5"/><path d="M7 1h4.500q1 0 1 1v4.500l1 .5v8l-1 .8h-5.500z" fill="#f2d774" stroke="#d0a838" stroke-width=".5"/><path d="M5.500 2.500v13" stroke="#fffbe0" stroke-width="1"/><path d="M12.300 8.500v3" stroke="#e8f4ff" stroke-width="1"/><path d="M12.300 11.500v1.800" stroke="#3a9ae8" stroke-width="1"/></svg>
<div class="a" style="left:282px;top:746px;width:14px;height:14px;background:#8ec0f0;border:1px solid #b8d8f8;box-sizing:border-box"></div><div class="a" style="left:283px;top:747px;width:12px;height:12px;border-radius:50%;background:#f08a18"></div><div class="a" style="left:287px;top:750px;width:0;height:0;border-top:3.500px solid transparent;border-bottom:3.500px solid transparent;border-left:5px solid #fff"></div>
<svg class="a" style="left:326px;top:744px" width="18" height="18" viewBox="326 744 18 18"><defs><linearGradient id="op" x1="0" y1="0" x2="0" y2="1"><stop offset="0" stop-color="#f03040"/><stop offset="1" stop-color="#c81020"/></linearGradient></defs><path fill-rule="evenodd" fill="url(#op)" d="M335 745a8 8 0 1 0 0 16a8 8 0 1 0 0-16zM335 747.500a2.300 5.500 0 1 1 0 11a2.300 5.500 0 1 1 0-11z"/></svg>
<div class="a" style="left:370px;top:746px;width:14px;height:14px;border-radius:50%;background:conic-gradient(from -60deg,#e8402c 0 120deg,#f8c818 120deg 240deg,#38a848 240deg 360deg)"></div><div class="a" style="left:374px;top:750px;width:6px;height:6px;border-radius:50%;background:#4a90e8;box-shadow:0 0 0 1.200px #fff"></div>
<svg class="a" style="left:531px;top:744px" width="18" height="18" viewBox="0 0 18 18"><path d="M1 11q0-6 6.500-6q4 0 4 3.500q0 2.500-2.300 2.800q-1 .2-.8 1.500q.3 2.700-3 2.700q-4.400 0-4.400-4.500z" fill="#e8eef8" stroke="#7888a0" stroke-width=".7"/><circle cx="3.800" cy="9.300" r="1.200" fill="#e03020"/><circle cx="7" cy="7.500" r="1.200" fill="#30a830"/><circle cx="10" cy="8" r="1" fill="#f0b020"/><circle cx="4.500" cy="12.700" r="1.200" fill="#3a70e0"/><path d="M13.800 1.500l-.5 5" stroke="#c89850" stroke-width="2.200"/><path d="M13.300 6l-.8 10" stroke="#f08818" stroke-width="1.800"/></svg>
<svg class="a" style="left:693px;top:745px" width="18" height="18" viewBox="0 0 18 18"><path d="M5 1l8 1.500-4 10-8-2z" fill="#e84848" stroke="#c03030" stroke-width=".5"/><path d="M13 2.500l1 9-5 1z" fill="#e8e8ee"/><path d="M6.500 12v5M4 14.500h5" stroke="#30b030" stroke-width="1.600"/><path d="M11.500 12v5M9 14.500h5" stroke="#f0d020" stroke-width="1.600"/></svg>
<div class="a" style="left:855px;top:745px;width:16px;height:16px;background:#fff"></div><div class="t b4" style="left:855.800px;top:744px;font-size:15px;transform:scaleX(.42)">B</div><div class="t b4" style="left:860.800px;top:745px;font-size:15px">4</div><div class="t b4" style="left:865.800px;top:748px;font-size:11px;transform:scaleX(.56)">A</div>
<div class="t" style="left:1144px;top:746px;font-size:11px;color:#fff">IN</div>
<div class="a" style="left:1174px;top:752px;width:0;height:0;border-left:4px solid transparent;border-right:4px solid transparent;border-bottom:4px solid #fff"></div>
<svg class="a" style="left:1190px;top:742px" width="74" height="24" viewBox="1190 742 74 24"><defs><linearGradient id="sb5" x1="0" y1="0" x2="0" y2="1"><stop offset="0" stop-color="#2c4c74"/><stop offset="1" stop-color="#6c88a8"/></linearGradient></defs><path d="M1195.500 746.500v14.500" stroke="#fff" stroke-width="1.700"/><path d="M1194.300 746v15.300h2.400v-15.300z" fill="none" stroke="#10243c" stroke-width=".5"/><path d="M1196.500 747.500h6.500v2h6.500l-.8 4h-5.700v.500h-6.500z" fill="#fff"/><path d="M1203.600 751h5l-.4 2h-4.600z" fill="#c8d4e4"/><circle cx="1205" cy="757" r="4.300" fill="#e8201c"/><circle cx="1205" cy="757" r="4.300" fill="none" stroke="#f8a8a0" stroke-opacity=".6" stroke-width=".7"/><path d="M1203 755l4 4M1207 755l-4 4" stroke="#fff" stroke-width="1.600"/><path d="M1218.500 756.500h3v-2h3v-2.500h3v-2h3v-2h3.500v11.500h-15.500z" fill="#10243c" opacity=".55"/><path d="M1219 757h2v2h-2zM1222 755h2v4h-2zM1225 752.500h2v6.500h-2zM1228 750.500h2v8.500h-2z" fill="#fff"/><path d="M1231 748.500h2.300v10.500h-2.300z" fill="url(#sb5)"/><path d="M1242.500 750.500h2.500l4.200-4.200v14.900l-4.200-4.200h-2.500z" fill="#fff" stroke="#10243c" stroke-width=".5"/><circle cx="1253" cy="757" r="4.300" fill="#e8201c"/><circle cx="1253" cy="757" r="4.300" fill="none" stroke="#f8a8a0" stroke-opacity=".6" stroke-width=".7"/><path d="M1251 755l4 4M1255 755l-4 4" stroke="#fff" stroke-width="1.600"/></svg>
<div class="t" id="clk" style="left:1294.500px;top:748px;font-size:12.500px;color:#fff;letter-spacing:-.7px">9:56</div>
<div class="a" style="left:1345px;top:738px;width:16px;height:31px;border:1px solid #0e2240;box-shadow:inset 0 0 0 1px rgba(255,255,255,.42);background:linear-gradient(to bottom,rgba(255,255,255,.22),rgba(255,255,255,.03));box-sizing:border-box"></div>
</body></html>
